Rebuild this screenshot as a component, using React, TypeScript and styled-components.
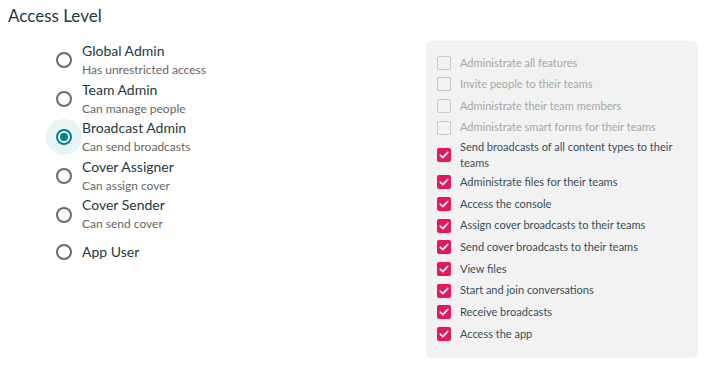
import styled, { createGlobalStyle } from 'styled-components';

const GlobalStyle = createGlobalStyle`
  body {
    margin: 0;
    background: #fff;
    font-family: Lato, 'Noto Sans', sans-serif;
  }
`;

const Page = styled.div`
  width: 706px;
  height: 365px;
  padding: 0 8px;
  box-sizing: border-box;
`;

const Title = styled.h2`
  margin: 0;
  padding-top: 5px;
  font-size: 17px;
  font-weight: 400;
  line-height: 22px;
  color: #1d3a3d;
`;

const Columns = styled.div`
  display: flex;
  justify-content: space-between;
  margin-top: 14px;
`;

const RoleList = styled.div`
  display: flex;
  flex-direction: column;
  padding-left: 38px;
`;

const RoleRow = styled.label`
  display: flex;
  align-items: center;
  min-height: 33px;
`;

const RadioHalo = styled.span<{ $active?: boolean }>`
  width: 36px;
  height: 36px;
  border-radius: 50%;
  display: flex;
  align-items: center;
  justify-content: center;
  background: ${(p) => (p.$active ? '#e8f3f3' : 'transparent')};
  flex-shrink: 0;
`;

const Radio = styled.span<{ $active?: boolean }>`
  width: 16px;
  height: 16px;
  box-sizing: border-box;
  border-radius: 50%;
  border: 2px solid ${(p) => (p.$active ? '#008489' : '#6b6b6b')};
  display: flex;
  align-items: center;
  justify-content: center;
  &::after {
    content: '';
    width: 8px;
    height: 8px;
    border-radius: 50%;
    background: ${(p) => (p.$active ? '#008489' : 'transparent')};
  }
`;

const RoleText = styled.div`
  display: flex;
  flex-direction: column;
`;

const RoleName = styled.span`
  font-size: 14px;
  line-height: 20px;
  color: #1d3a3d;
`;

const RoleDesc = styled.span`
  font-size: 12px;
  line-height: 18.6px;
  color: #666;
`;

const Panel = styled.div`
  width: 272px;
  box-sizing: border-box;
  background: #f2f2f2;
  border-radius: 6px;
  padding: 11px 12px 13px 11px;
  display: flex;
  flex-direction: column;
`;

const PermRow = styled.div`
  display: flex;
  align-items: center;
  gap: 9px;
  min-height: 21.65px;
`;

const Box = styled.span<{ $checked?: boolean }>`
  width: 14px;
  height: 14px;
  box-sizing: border-box;
  border-radius: 2px;
  flex-shrink: 0;
  display: flex;
  align-items: center;
  justify-content: center;
  background: ${(p) => (p.$checked ? '#e8175d' : 'transparent')};
  border: ${(p) => (p.$checked ? 'none' : '1.5px solid #c8c8c8')};
`;

const PermText = styled.span<{ $checked?: boolean }>`
  font-size: 11px;
  line-height: 16.5px;
  color: ${(p) => (p.$checked ? '#35505a' : '#a8a8a8')};
`;

const roles = [
  { name: 'Global Admin', desc: 'Has unrestricted access' },
  { name: 'Team Admin', desc: 'Can manage people' },
  { name: 'Broadcast Admin', desc: 'Can send broadcasts', active: true },
  { name: 'Cover Assigner', desc: 'Can assign cover' },
  { name: 'Cover Sender', desc: 'Can send cover' },
  { name: 'App User' },
];

const permissions = [
  { label: 'Administrate all features', checked: false },
  { label: 'Invite people to their teams', checked: false },
  { label: 'Administrate their team members', checked: false },
  { label: 'Administrate smart forms for their teams', checked: false },
  { label: 'Send broadcasts of all content types to their teams', checked: true },
  { label: 'Administrate files for their teams', checked: true },
  { label: 'Access the console', checked: true },
  { label: 'Assign cover broadcasts to their teams', checked: true },
  { label: 'Send cover broadcasts to their teams', checked: true },
  { label: 'View files', checked: true },
  { label: 'Start and join conversations', checked: true },
  { label: 'Receive broadcasts', checked: true },
  { label: 'Access the app', checked: true },
];

function Tick() {
  return (
    <svg width="10" height="8" viewBox="0 0 10 8">
      <path
        d="M1.2 4.2 L3.8 6.6 L8.8 1.4"
        fill="none"
        stroke="#fff"
        strokeWidth="1.6"
        strokeLinecap="round"
        strokeLinejoin="round"
      />
    </svg>
  );
}

export default function App() {
  return (
    <Page>
      <GlobalStyle />
      <Title>Access Level</Title>
      <Columns>
        <RoleList>
          {roles.map((role) => (
            <RoleRow key={role.name}>
              <RadioHalo $active={role.active}>
                <Radio $active={role.active} />
              </RadioHalo>
              <RoleText>
                <RoleName>{role.name}</RoleName>
                {role.desc && <RoleDesc>{role.desc}</RoleDesc>}
              </RoleText>
            </RoleRow>
          ))}
        </RoleList>
        <Panel>
          {permissions.map((perm) => (
            <PermRow key={perm.label}>
              <Box $checked={perm.checked}>{perm.checked && <Tick />}</Box>
              <PermText $checked={perm.checked}>{perm.label}</PermText>
            </PermRow>
          ))}
        </Panel>
      </Columns>
    </Page>
  );
}
